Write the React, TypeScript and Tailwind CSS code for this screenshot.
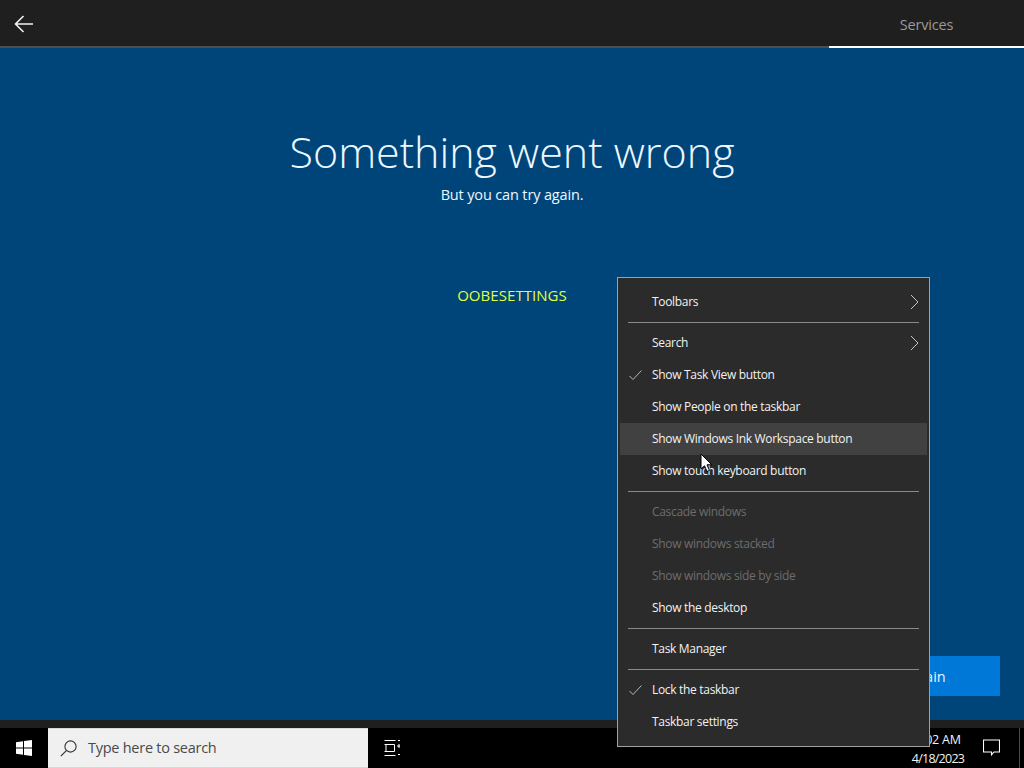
const font = { fontFamily: '"Open Sans", "Noto Sans", sans-serif' };

function Row({ label, check, arrow, disabled, hover }: { label: string; check?: boolean; arrow?: boolean; disabled?: boolean; hover?: boolean }) {
  return (
    <div className={`relative flex h-8 items-center pl-8 text-[12px] tracking-[-0.31px] ${hover ? "bg-[#414141]" : ""} ${disabled ? "text-[#6d6d6d]" : "text-[#f2f2f2]"}`}>
      {check && (
        <svg className="absolute left-[9px] top-[11px]" width="13" height="12" viewBox="0 0 13 12" fill="none">
          <path d="M0.5 6 L4 9.5 L12.5 0.5" stroke="#b8b8b8" strokeWidth="1" />
        </svg>
      )}
      <span>{label}</span>
      {arrow && (
        <svg className="absolute right-2 top-[8px]" width="10" height="16" viewBox="0 0 10 16" fill="none">
          <path d="M2 1 L9 8 L2 15" stroke="#c4c4c4" strokeWidth="1" />
        </svg>
      )}
    </div>
  );
}

function Sep() {
  return (
    <div className="flex h-[9px] items-center px-2">
      <div className="h-px w-full bg-[#8a8a8a]" />
    </div>
  );
}

export default function App() {
  return (
    <div className="relative flex h-[768px] w-[1024px] flex-col overflow-hidden bg-[#00457a]" style={font}>
      <header className="flex h-[48px] shrink-0 items-stretch justify-between border-b-2 border-[#4d4d4d] bg-[#1f1f1f]">
        <button className="flex w-12 items-center justify-center pt-[2px]">
          <svg width="20" height="18" viewBox="0 0 20 18" fill="none">
            <path d="M9.5 1 L1.5 9 L9.5 17 M1.5 9 H19" stroke="#f2f2f2" strokeWidth="1.6" />
          </svg>
        </button>
        <div className="-mb-[2px] flex w-[195px] items-center justify-center border-b-2 border-white pt-[4px] text-[14.5px] tracking-[-0.2px] text-[#9a9a9a]">
          Services
        </div>
      </header>

      <main className="flex min-h-0 flex-1 flex-col items-center pt-[70px] text-white">
        <h1 className="text-[43px] leading-[68px] font-light text-[#eef8ff]">Something went wrong</h1>
        <p className="mt-[-1px] text-[14.5px] leading-[20px] tracking-[-0.15px] text-[#eef8ff]">But you can try again.</p>
        <p className="mt-[80px] text-[15px] leading-[20px] tracking-[0.05px] text-[#e0ff3c]">OOBESETTINGS</p>
        <div className="mt-auto mb-[24px] flex w-full justify-end pr-6">
          <button className="flex h-10 w-[170px] items-center justify-center bg-[#0078d7] pt-px text-[14.5px] text-[#e6f4ff]">Try again</button>
        </div>
      </main>

      <div className="h-2 shrink-0 bg-[#1f1f1f]" />

      <footer className="flex h-10 shrink-0 items-stretch bg-black text-white">
        <div className="flex w-12 items-center justify-center">
          <svg width="16" height="16" viewBox="0 0 16 16" fill="#fff">
            <path d="M0 2.3 L7 1.3 V7.5 H0 Z M8 1.1 L16 0 V7.5 H8 Z M0 8.5 H7 V14.7 L0 13.7 Z M8 8.5 H16 V16 L8 14.9 Z" />
          </svg>
        </div>
        <div className="flex w-[320px] items-center border-y border-[#d8d8d8] bg-[#f0f0f0] pl-3">
          <svg width="17" height="17" viewBox="0 0 17 17" fill="none">
            <circle cx="10.5" cy="6.5" r="5.6" stroke="#333" strokeWidth="1.1" />
            <path d="M6.6 10.4 L0.8 16.2" stroke="#333" strokeWidth="1.2" />
          </svg>
          <span className="ml-[11px] text-[14.5px] tracking-[-0.26px] text-[#4a4a4a]">Type here to search</span>
        </div>
        <div className="flex w-12 items-center justify-center">
          <svg width="16" height="16" viewBox="0 0 16 16" fill="none" stroke="#fff">
            <path d="M0.5 0.5 H11.5 M2 4.5 H10.5 V11.5 H2 V4.5 Z M0.5 4.5 H2 M0.5 11.5 H2 M0.5 15.5 H11.5" />
            <path d="M14 0.5 h2 M14 5 h2 v2 h-2 z M14 14.5 h2" />
          </svg>
        </div>
        <div className="flex-1" />
        <div className="flex w-[70px] flex-col items-center justify-center pt-px text-[12.5px] leading-[19px] text-[#f2f2f2]">
          <span className="tracking-[-0.2px]">9:02 AM</span>
          <span className="tracking-[-0.75px]">4/18/2023</span>
        </div>
        <div className="ml-[6px] flex w-10 items-center justify-center pr-[16px] pb-[1px]">
          <svg width="17" height="17" viewBox="0 0 17 17" fill="none">
            <path d="M0.5 1 H16.5 V13 H11 L8.5 15.8 V13 H0.5 Z" stroke="#fff" strokeWidth="1.1" />
          </svg>
        </div>
        <div className="flex w-[5px] items-center">
          <div className="h-full w-px bg-[#4a4a4a]" />
        </div>
      </footer>

      <div className="absolute left-[617px] top-[277px] w-[313px] border border-[#a0a0a0] bg-[#2b2b2b] px-[2px] py-[8px]">
        <Row label="Toolbars" arrow />
        <Sep />
        <Row label="Search" arrow />
        <Row label="Show Task View button" check />
        <Row label="Show People on the taskbar" />
        <Row label="Show Windows Ink Workspace button" hover />
        <Row label="Show touch keyboard button" />
        <Sep />
        <Row label="Cascade windows" disabled />
        <Row label="Show windows stacked" disabled />
        <Row label="Show windows side by side" disabled />
        <Row label="Show the desktop" />
        <Sep />
        <Row label="Task Manager" />
        <Sep />
        <Row label="Lock the taskbar" check />
        <Row label="Taskbar settings" />
      </div>

      <svg className="absolute left-[700px] top-[453px]" width="13" height="20" viewBox="0 0 13 20">
        <path d="M1 1 V16 L4.5 12.8 L7 18.5 L9.5 17.4 L7 11.8 H11.8 Z" fill="#fff" stroke="#000" strokeWidth="1" />
      </svg>
    </div>
  );
}
